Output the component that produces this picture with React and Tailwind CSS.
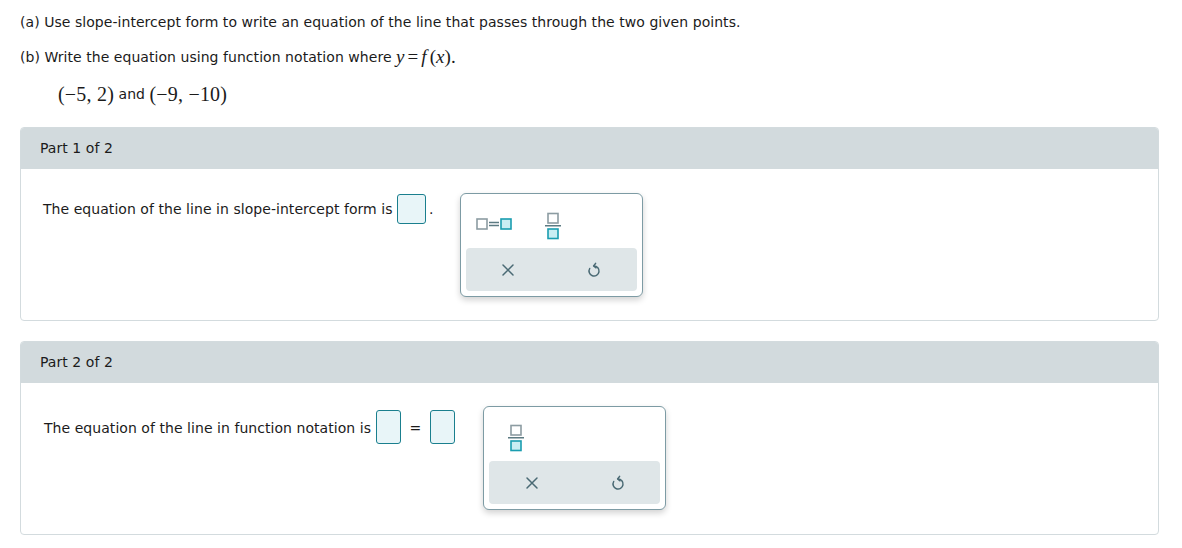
import React from "react";

const sans = { fontFamily: '"DejaVu Sans", Verdana, sans-serif' };
const serif = { fontFamily: '"Liberation Serif", "Times New Roman", serif' };

function Box({ w = 28, h = 29 }) {
  return (
    <span
      className="inline-block box-border rounded-[3px] border border-[#1a7f8e] bg-[#e8f5f8]"
      style={{ width: w, height: h }}
    />
  );
}

function EqIcon() {
  return (
    <svg width="36" height="14" viewBox="0 0 36 14">
      <rect x="1" y="2" width="10" height="10" fill="#fff" stroke="#8c9ca2" strokeWidth="1.6" />
      <line x1="13" y1="5.5" x2="23" y2="5.5" stroke="#5c7a82" strokeWidth="1.4" />
      <line x1="13" y1="8.5" x2="23" y2="8.5" stroke="#5c7a82" strokeWidth="1.4" />
      <rect x="25" y="2" width="10" height="10" fill="#c9eef3" stroke="#1a9db0" strokeWidth="1.6" />
    </svg>
  );
}

function FracIcon() {
  return (
    <svg width="18" height="28" viewBox="0 0 18 28">
      <rect x="4" y="1.5" width="10" height="9.5" fill="#fff" stroke="#8c9ca2" strokeWidth="1.6" />
      <line x1="1" y1="13.8" x2="17" y2="13.8" stroke="#5c7a82" strokeWidth="1.4" />
      <rect x="4" y="17" width="10" height="9.5" fill="#c9eef3" stroke="#1a9db0" strokeWidth="1.6" />
    </svg>
  );
}

function XIcon() {
  return (
    <svg width="14" height="14" viewBox="0 0 14 14">
      <path d="M2 2 L12 12 M12 2 L2 12" stroke="#4a6a74" strokeWidth="1.5" strokeLinecap="round" />
    </svg>
  );
}

function UndoIcon() {
  return (
    <svg width="14" height="16" viewBox="0 0 14 16">
      <path
        d="M7 4 A5 5 0 1 1 2.7 6.5"
        fill="none"
        stroke="#4a6a74"
        strokeWidth="1.5"
        strokeLinecap="round"
      />
      <path d="M8.6 1.4 L6.6 4 L9 5.8" fill="none" stroke="#4a6a74" strokeWidth="1.5" strokeLinecap="round" strokeLinejoin="round" />
    </svg>
  );
}

function Palette({ children, topPad }) {
  return (
    <div className="box-border flex h-[104px] w-[183px] flex-col rounded-[6px] border border-[#7d9ba4] bg-white p-[5px] shadow-[0_3px_6px_rgba(0,0,0,0.18)]">
      <div className="flex h-[49px] items-center" style={{ paddingLeft: topPad }}>
        {children}
      </div>
      <div className="grid h-[43px] grid-cols-2 items-center rounded-[4px] bg-[#dfe6e8]">
        <div className="flex justify-center">
          <XIcon />
        </div>
        <div className="flex justify-center">
          <UndoIcon />
        </div>
      </div>
    </div>
  );
}

function Card({ title, children }) {
  return (
    <div className="overflow-hidden rounded-[4px] border border-[#d3dbde] bg-white">
      <div className="flex h-[41px] items-center bg-[#d2dadd] pl-[19px] text-[14px] text-[#1b1b1b]">
        {title}
      </div>
      <div className="h-[151px]">{children}</div>
    </div>
  );
}

export default function App() {
  return (
    <div
      className="min-h-[548px] bg-white pl-[20px] pr-[23px] pt-[13px] text-[14px] tracking-[0.05px] text-[#1b1b1b]"
      style={sans}
    >
      <p className="h-[18px] leading-[18px]">
        (a) Use slope-intercept form to write an equation of the line that passes through the two given points.
      </p>
      <p className="mt-[17px] flex h-[18px] items-center leading-[18px]">
        (b) Write the equation using function notation where&nbsp;
        <span className="flex items-center text-[19px]" style={serif}>
          <i>y</i>
          <span className="mx-[3px]">=</span>
          <i>f</i>
          <span className="ml-[3px]">(</span>
          <i>x</i>
          <span>).</span>
        </span>
      </p>
      <p className="ml-[38px] mt-[17px] flex h-[22px] items-center">
        <span className="text-[20px] tracking-[0.2px]" style={serif}>
          (−5, 2)
        </span>
        <span>&nbsp;and&nbsp;</span>
        <span className="text-[20px] tracking-[0.2px]" style={serif}>
          (−9, −10)
        </span>
      </p>

      <div className="mt-[22px]">
        <Card title="Part 1 of 2">
          <div className="flex items-start pl-[22px] pt-[24px]">
            <div className="flex items-center pt-[1px]">
              <span>The equation of the line in slope-intercept form is&nbsp;</span>
              <Box w={29} h={30} />
              <span className="ml-[3px]">.</span>
            </div>
            <div className="ml-[26px]">
              <Palette topPad={10}>
                <EqIcon />
                <span className="ml-[32px] mt-[4px] flex">
                  <FracIcon />
                </span>
              </Palette>
            </div>
          </div>
        </Card>
      </div>

      <div className="mt-[20px]">
        <Card title="Part 2 of 2">
          <div className="flex items-start pl-[23px] pt-[23px]">
            <div className="flex items-center pt-[4px]">
              <span className="pt-[2px]">The equation of the line in function notation is&nbsp;</span>
              <Box w={25} h={34} />
              <span className="mx-[9px] pt-[2px]">=</span>
              <Box w={25} h={34} />
            </div>
            <div className="ml-[28px]">
              <Palette topPad={18}>
                <span className="mt-[2px] flex">
                  <FracIcon />
                </span>
              </Palette>
            </div>
          </div>
        </Card>
      </div>
    </div>
  );
}
